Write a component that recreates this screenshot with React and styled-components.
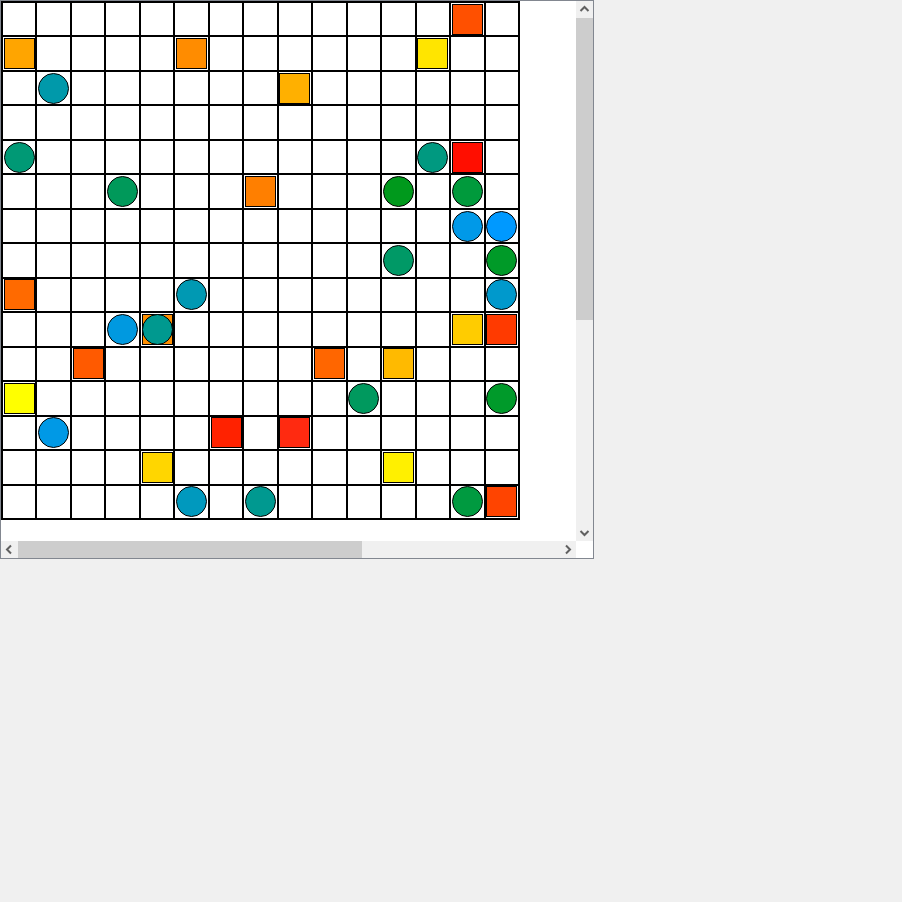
import styled, { createGlobalStyle } from "styled-components";

const GlobalStyle = createGlobalStyle`
  html, body {
    margin: 0;
    padding: 0;
    background: #f0f0f0;
    font-family: "Liberation Sans", Arial, sans-serif;
  }
`;

const ScrollBox = styled.div`
  width: 594px;
  height: 559px;
  box-sizing: border-box;
  border: 1px solid #828790;
  background: #ffffff;
  display: grid;
  grid-template-columns: 575px 17px;
  grid-template-rows: 540px 17px;
`;

const Viewport = styled.div`
  overflow: hidden;
`;

const Bar = styled.div`
  display: flex;
  flex-direction: ${(p) => (p.$vertical ? "column" : "row")};
  background: #f0f0f0;
`;

const Track = styled.div`
  flex: 1;
  display: flex;
  flex-direction: ${(p) => (p.$vertical ? "column" : "row")};
`;

const Thumb = styled.div`
  flex: 0 0 ${(p) => p.$size}px;
  background: #cdcdcd;
`;

const ArrowButton = styled.div`
  flex: 0 0 17px;
  width: 17px;
  height: 17px;
  display: flex;
  align-items: center;
  justify-content: center;
`;

const Corner = styled.div`
  background: #ffffff;
`;

const Canvas = styled.div`
  width: 905px;
  height: 905px;
`;

const Board = styled.div`
  width: 519px;
  height: 519px;
  box-sizing: border-box;
  border: 1px solid #000;
  display: grid;
  grid-template-columns: repeat(15, 1fr);
  grid-template-rows: repeat(15, 1fr);
`;

const Cell = styled.div`
  border: 1px solid #000;
  display: grid;
  place-items: center;
  min-width: 0;
  min-height: 0;
`;

const Square = styled.div`
  grid-area: 1 / 1;
  width: 31px;
  height: 31px;
  box-sizing: border-box;
  border: 1px solid #000;
  background: ${(p) => p.$color};
`;

const Circle = styled.div`
  grid-area: 1 / 1;
  width: 31px;
  height: 31px;
  box-sizing: border-box;
  border: 1px solid #000;
  border-radius: 50%;
  background: ${(p) => p.$color};
`;

const chevrons = {
  up: "M4.5 10 L8.5 6 L12.5 10",
  down: "M4.5 7 L8.5 11 L12.5 7",
  left: "M10 4.5 L6 8.5 L10 12.5",
  right: "M7 4.5 L11 8.5 L7 12.5",
};

const Arrow = ({ dir }) => (
  <ArrowButton>
    <svg width="17" height="17" viewBox="0 0 17 17">
      <path d={chevrons[dir]} fill="none" stroke="#606060" strokeWidth="2" />
    </svg>
  </ArrowButton>
);

// [row, col, kind, colour]
const pieces = [
  [0, 13, "sq", "#ff5000"],
  [1, 0, "sq", "#ffa500"],
  [1, 5, "sq", "#ff8c00"],
  [1, 12, "sq", "#ffe500"],
  [2, 1, "ci", "#0099aa"],
  [2, 8, "sq", "#ffb000"],
  [4, 0, "ci", "#009975"],
  [4, 12, "ci", "#009980"],
  [4, 13, "sq", "#ff0e00"],
  [5, 3, "ci", "#00995a"],
  [5, 7, "sq", "#ff7f00"],
  [5, 11, "ci", "#00991c"],
  [5, 13, "ci", "#009a3c"],
  [6, 13, "ci", "#0099e8"],
  [6, 14, "ci", "#0099ff"],
  [7, 11, "ci", "#009966"],
  [7, 14, "ci", "#009a28"],
  [8, 0, "sq", "#ff6a00"],
  [8, 5, "ci", "#0099b3"],
  [8, 14, "ci", "#0099cc"],
  [9, 3, "ci", "#0099e0"],
  [9, 4, "sq", "#ff8f00"],
  [9, 4, "ci", "#00998f"],
  [9, 13, "sq", "#ffcc00"],
  [9, 14, "sq", "#ff3a00"],
  [10, 2, "sq", "#ff5a00"],
  [10, 9, "sq", "#ff6600"],
  [10, 11, "sq", "#ffba00"],
  [11, 0, "sq", "#ffff00"],
  [11, 10, "ci", "#00995e"],
  [11, 14, "ci", "#009a2a"],
  [12, 1, "ci", "#0099e6"],
  [12, 6, "sq", "#ff2200"],
  [12, 8, "sq", "#ff2a10"],
  [13, 4, "sq", "#ffd600"],
  [13, 11, "sq", "#fff000"],
  [14, 5, "ci", "#0099be"],
  [14, 7, "ci", "#009990"],
  [14, 13, "ci", "#009a40"],
  [14, 14, "sq", "#ff4400"],
];

const SIZE = 15;

export default function App() {
  const cells = [];
  for (let r = 0; r < SIZE; r++) {
    for (let c = 0; c < SIZE; c++) {
      const here = pieces.filter((p) => p[0] === r && p[1] === c);
      const squares = here.filter((p) => p[2] === "sq");
      const circles = here.filter((p) => p[2] === "ci");
      cells.push(
        <Cell key={`${r}-${c}`}>
          {squares.map((p, i) => (
            <Square key={`s${i}`} $color={p[3]} />
          ))}
          {circles.map((p, i) => (
            <Circle key={`c${i}`} $color={p[3]} />
          ))}
        </Cell>
      );
    }
  }

  return (
    <>
      <GlobalStyle />
      <ScrollBox>
        <Viewport>
          <Canvas>
            <Board>{cells}</Board>
          </Canvas>
        </Viewport>
        <Bar $vertical>
          <Arrow dir="up" />
          <Track $vertical>
            <Thumb $size={302} />
          </Track>
          <Arrow dir="down" />
        </Bar>
        <Bar>
          <Arrow dir="left" />
          <Track>
            <Thumb $size={344} />
          </Track>
          <Arrow dir="right" />
        </Bar>
        <Corner />
      </ScrollBox>
    </>
  );
}
